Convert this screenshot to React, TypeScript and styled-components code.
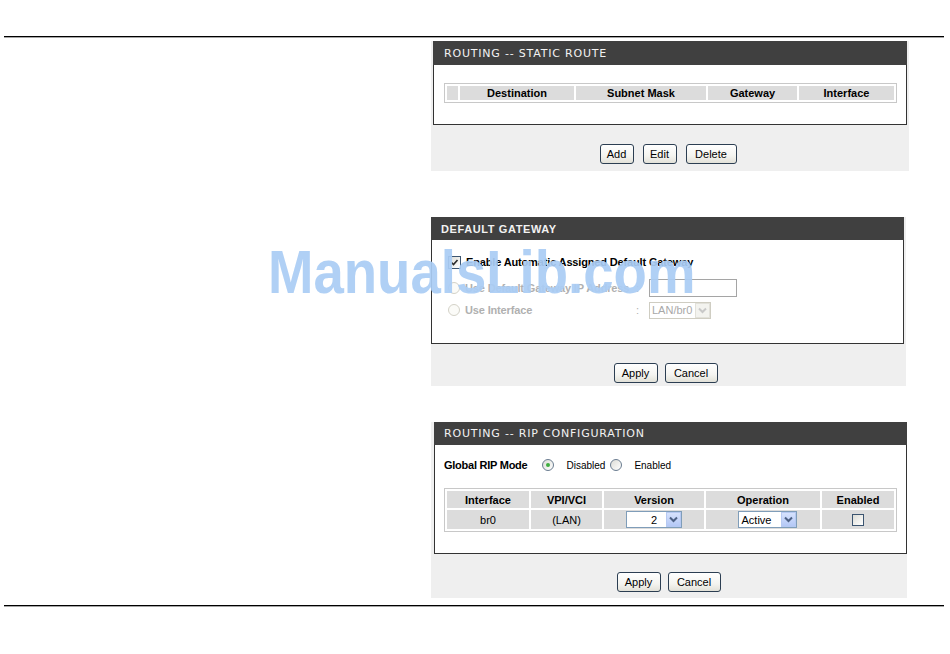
import React from "react";
import styled, { createGlobalStyle, css } from "styled-components";

const GlobalStyle = createGlobalStyle`
  html, body { margin: 0; padding: 0; background: #fff; }
  body { font-family: "Liberation Sans", Arial, sans-serif; font-size: 11px; color: #000; }
  * { box-sizing: border-box; }
`;

const Page = styled.div`
  position: relative;
  width: 950px;
  height: 654px;
  padding-top: 36px;
  overflow: hidden;
`;

const Rule = styled.div<{ $top?: number }>`
  height: 1px;
  margin: ${(p) => p.$top ?? 0}px 6px 0 4px;
  background: #000;
  box-shadow: 0 1px 0 rgba(0, 0, 0, 0.35);
`;

const Column = styled.main`
  display: flex;
  flex-direction: column;
  align-items: flex-start;
  margin-left: 431px;
`;

const Panel = styled.section<{ $w: number; $top: number; $pl: number; $pr: number }>`
  width: ${(p) => p.$w}px;
  margin-top: ${(p) => p.$top}px;
  padding: 0 ${(p) => p.$pr}px 0 ${(p) => p.$pl}px;
  background: #efefef;
  display: flex;
  flex-direction: column;
`;

const Header = styled.div<{ $h: number; $pl: number }>`
  height: ${(p) => p.$h}px;
  background: #404040;
  display: flex;
  align-items: center;
  padding-left: ${(p) => p.$pl}px;
`;

const Title = styled.h2<{ $bold?: boolean }>`
  margin: 0;
  color: #f2f2f2;
  font-family: "DejaVu Sans", Verdana, sans-serif;
  font-size: 11px;
  font-weight: normal;
  letter-spacing: 0.8px;
  ${(p) =>
    p.$bold &&
    css`
      font-family: "Liberation Sans", Arial, sans-serif;
      font-weight: bold;
      letter-spacing: 0.6px;
    `}
`;

const Box = styled.div<{ $h: number; $pad: string }>`
  height: ${(p) => p.$h}px;
  background: #fff;
  border: 1px solid #333;
  border-top: none;
  padding: ${(p) => p.$pad};
`;

const ButtonBar = styled.div<{ $pt: number; $pb: number; $gap: number }>`
  display: flex;
  justify-content: center;
  gap: ${(p) => p.$gap}px;
  padding: ${(p) => p.$pt}px 4px ${(p) => p.$pb}px 0;
`;

const Btn = styled.button<{ $w: number }>`
  width: ${(p) => p.$w}px;
  height: 20px;
  padding: 0;
  border: 1px solid #2c3e52;
  border-radius: 3px;
  background: linear-gradient(#ffffff, #f4f4f0 60%, #e2e1d8);
  font: 11px "Liberation Sans", Arial, sans-serif;
  color: #000;
`;

const Grid = styled.table<{ $mt: number }>`
  width: 453px;
  margin-top: ${(p) => p.$mt}px;
  border: 1px solid #c8c8c8;
  border-spacing: 2px;
  table-layout: fixed;
  background: #fff;
`;

const Th = styled.th<{ $w?: number; $h: number }>`
  ${(p) => (p.$w ? `width: ${p.$w}px;` : "")}
  height: ${(p) => p.$h}px;
  padding: 0;
  background: #dcdcdc;
  font-size: 11px;
  line-height: 14px;
  font-weight: bold;
  text-align: center;
  color: #000;
`;

const Td = styled.td<{ $h: number; $pl?: number }>`
  height: ${(p) => p.$h}px;
  padding: 0 0 0 ${(p) => p.$pl ?? 0}px;
  background: #dcdcdc;
  font-size: 11px;
  text-align: center;
  vertical-align: middle;
`;

const FormRow = styled.div<{ $mt: number }>`
  display: flex;
  align-items: center;
  height: 18px;
  margin-top: ${(p) => p.$mt}px;
`;

const Choice = styled.label<{ $disabled?: boolean; $w?: number }>`
  display: flex;
  align-items: center;
  gap: 5px;
  ${(p) => (p.$w ? `width: ${p.$w}px;` : "")}
  font-weight: bold;
  letter-spacing: -0.15px;
  color: ${(p) => (p.$disabled ? "#b0b0b0" : "#000")};
`;

const Colon = styled.span`
  width: 13px;
  color: #b0b0b0;
`;

const CheckBox = styled.span<{ $size: number }>`
  flex: none;
  display: inline-flex;
  align-items: center;
  justify-content: center;
  vertical-align: middle;
  width: ${(p) => p.$size}px;
  height: ${(p) => p.$size}px;
  border: 1px solid #3b5470;
  background: linear-gradient(135deg, #dcdcd6, #ffffff);
`;

const Radio = styled.span<{ $checked?: boolean; $disabled?: boolean }>`
  flex: none;
  display: inline-flex;
  align-items: center;
  justify-content: center;
  width: 12px;
  height: 12px;
  border-radius: 50%;
  border: 1px solid ${(p) => (p.$disabled ? "#d4d2c8" : "#6a7c90")};
  background: ${(p) => (p.$disabled ? "#fbfbf8" : "linear-gradient(135deg, #dcdcd6, #ffffff)")};
  &::after {
    content: "";
    display: ${(p) => (p.$checked ? "block" : "none")};
    width: 4px;
    height: 4px;
    border-radius: 50%;
    background: #3fae3f;
  }
`;

const TextInput = styled.span`
  display: block;
  width: 88px;
  height: 18px;
  border: 1px solid #a5a5a5;
  background: #fff;
`;

const Select = styled.span<{ $w: number; $pl: number; $disabled?: boolean }>`
  display: inline-flex;
  align-items: center;
  justify-content: space-between;
  vertical-align: middle;
  width: ${(p) => p.$w}px;
  height: 17px;
  padding-left: ${(p) => p.$pl}px;
  border: 1px solid ${(p) => (p.$disabled ? "#cfcdc2" : "#7f9db9")};
  background: #fff;
  font-size: 11px;
  color: ${(p) => (p.$disabled ? "#a8a8a8" : "#000")};
`;

const SelectArrow = styled.span<{ $disabled?: boolean }>`
  flex: none;
  display: inline-flex;
  align-items: center;
  justify-content: center;
  width: 15px;
  height: 15px;
  border: 1px solid ${(p) => (p.$disabled ? "#e2e1da" : "#b6c9f2")};
  background: ${(p) => (p.$disabled ? "#f3f3ef" : "linear-gradient(#d6e2fd, #b4c8f6)")};
`;

const ModeRow = styled.div`
  display: flex;
  align-items: center;
  height: 16px;
`;

const ModeLabel = styled.span`
  font-weight: bold;
  letter-spacing: -0.25px;
  margin-right: 15px;
`;

const ModeText = styled.span<{ $ml: number; $mr: number }>`
  font-size: 10px;
  margin-left: ${(p) => p.$ml}px;
  margin-right: ${(p) => p.$mr}px;
`;

const Watermark = styled.div`
  position: absolute;
  left: 268px;
  top: 241px;
  font-family: "Liberation Sans", Arial, sans-serif;
  font-weight: bold;
  font-size: 62px;
  line-height: 1;
  color: rgba(170, 204, 244, 0.93);
  transform: scaleX(0.88);
  transform-origin: left top;
  white-space: nowrap;
  pointer-events: none;
`;

const Chevron = ({ disabled }: { disabled?: boolean }) => (
  <svg width="9" height="7" viewBox="0 0 9 7">
    <polyline
      points="1,1.5 4.5,5 8,1.5"
      fill="none"
      stroke={disabled ? "#c8c8c8" : "#4d6185"}
      strokeWidth="2"
    />
  </svg>
);

const Tick = () => (
  <svg width="9" height="9" viewBox="0 0 9 9">
    <polyline points="1.5,4.5 3.5,6.5 7.5,2" fill="none" stroke="#2a2a2a" strokeWidth="1.6" />
  </svg>
);

export default function App() {
  return (
    <Page>
      <GlobalStyle />
      <Rule />
      <Column>
        <Panel $w={478} $top={4} $pl={2} $pr={2}>
          <Header $h={24} $pl={11}>
            <Title>ROUTING -- STATIC ROUTE</Title>
          </Header>
          <Box $h={60} $pad="18px 9px 0 10px">
            <Grid $mt={0}>
              <thead>
                <tr>
                  <Th $w={11} $h={14}></Th>
                  <Th $w={114} $h={14}>Destination</Th>
                  <Th $w={130} $h={14}>Subnet Mask</Th>
                  <Th $w={89} $h={14}>Gateway</Th>
                  <Th $h={14}>Interface</Th>
                </tr>
              </thead>
            </Grid>
          </Box>
          <ButtonBar $pt={19} $pb={7} $gap={9}>
            <Btn $w={34}>Add</Btn>
            <Btn $w={34}>Edit</Btn>
            <Btn $w={51}>Delete</Btn>
          </ButtonBar>
        </Panel>

        <Panel $w={475} $top={46} $pl={0} $pr={2}>
          <Header $h={23} $pl={10}>
            <Title $bold>DEFAULT GATEWAY</Title>
          </Header>
          <Box $h={104} $pad="13px 0 0 16px">
            <FormRow $mt={0}>
              <Choice>
                <CheckBox $size={13}>
                  <Tick />
                </CheckBox>
                Enable Automatic Assigned Default Gateway
              </Choice>
            </FormRow>
            <FormRow $mt={8}>
              <Choice $disabled $w={188}>
                <Radio $disabled />
                Use Default Gateway IP Address
              </Choice>
              <Colon>:</Colon>
              <TextInput />
            </FormRow>
            <FormRow $mt={4}>
              <Choice $disabled $w={188}>
                <Radio $disabled />
                Use Interface
              </Choice>
              <Colon>:</Colon>
              <Select $w={62} $pl={2} $disabled>
                LAN/br0
                <SelectArrow $disabled>
                  <Chevron disabled />
                </SelectArrow>
              </Select>
            </FormRow>
          </Box>
          <ButtonBar $pt={19} $pb={3} $gap={7}>
            <Btn $w={44}>Apply</Btn>
            <Btn $w={53}>Cancel</Btn>
          </ButtonBar>
        </Panel>

        <Panel $w={476} $top={36} $pl={3} $pr={0}>
          <Header $h={23} $pl={10}>
            <Title>ROUTING -- RIP CONFIGURATION</Title>
          </Header>
          <Box $h={109} $pad="12px 9px 0 9px">
            <ModeRow>
              <ModeLabel>Global RIP Mode</ModeLabel>
              <Radio $checked />
              <ModeText $ml={12} $mr={5}>Disabled</ModeText>
              <Radio />
              <ModeText $ml={12} $mr={0}>Enabled</ModeText>
            </ModeRow>
            <Grid $mt={15}>
              <thead>
                <tr>
                  <Th $w={82} $h={17}>Interface</Th>
                  <Th $w={71} $h={17}>VPI/VCI</Th>
                  <Th $w={100} $h={17}>Version</Th>
                  <Th $w={114} $h={17}>Operation</Th>
                  <Th $h={17}>Enabled</Th>
                </tr>
              </thead>
              <tbody>
                <tr>
                  <Td $h={19}>br0</Td>
                  <Td $h={19}>(LAN)</Td>
                  <Td $h={19}>
                    <Select $w={56} $pl={24}>
                      2
                      <SelectArrow>
                        <Chevron />
                      </SelectArrow>
                    </Select>
                  </Td>
                  <Td $h={19} $pl={8}>
                    <Select $w={59} $pl={3}>
                      Active
                      <SelectArrow>
                        <Chevron />
                      </SelectArrow>
                    </Select>
                  </Td>
                  <Td $h={19}>
                    <CheckBox $size={12} />
                  </Td>
                </tr>
              </tbody>
            </Grid>
          </Box>
          <ButtonBar $pt={18} $pb={6} $gap={7}>
            <Btn $w={44}>Apply</Btn>
            <Btn $w={53}>Cancel</Btn>
          </ButtonBar>
        </Panel>
      </Column>
      <Rule $top={7} />
      <Watermark>ManualsLib.com</Watermark>
    </Page>
  );
}
